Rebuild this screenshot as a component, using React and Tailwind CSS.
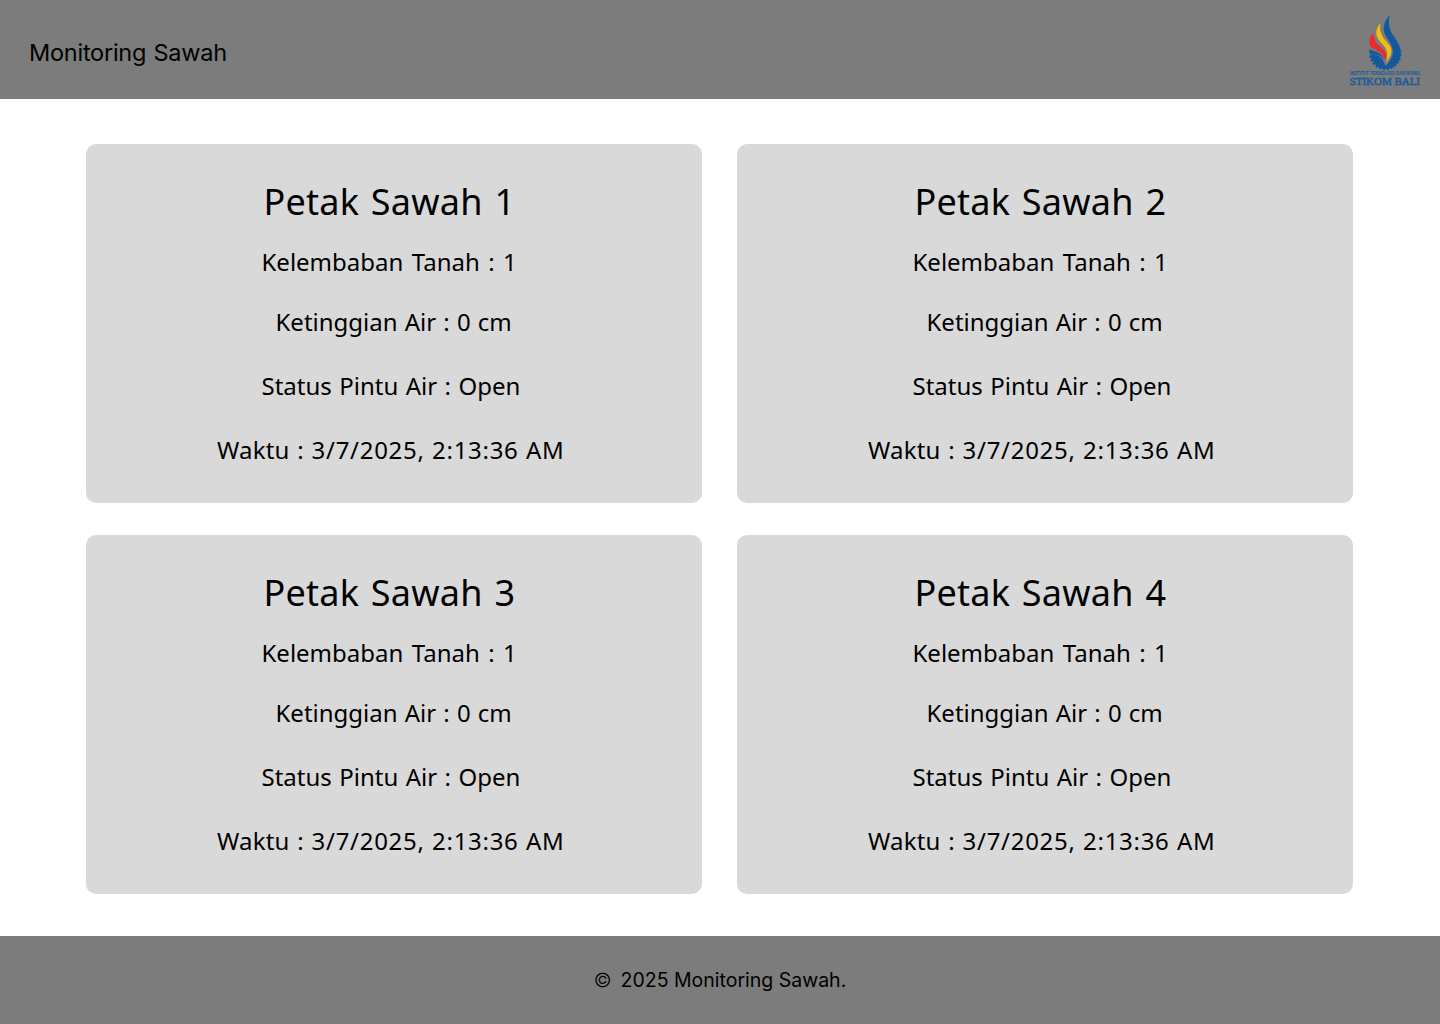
const plots = [1, 2, 3, 4].map((id) => ({
  id,
  moisture: "1",
  level: "0 cm",
  gate: "Open",
  time: "3/7/2025, 2:13:36 AM",
}));

function Logo() {
  return (
    <svg className="h-[86px] w-[90px] shrink-0" viewBox="0 0 270 258" aria-label="STIKOM BALI">
      <clipPath id="gear">
        <path d="M80 138 L110 138 L135 160 L160 130 L176 120 H192 V195 H80Z" />
      </clipPath>
      <circle cx="136" cy="138" r="44" fill="none" stroke="#15599d" strokeWidth="9" strokeDasharray="6.6 4.92" pathLength="276.5" clipPath="url(#gear)" />
      <path d="M92 139 C110 138 128 146 136 173 C152 160 162 140 157 120 C152 102 136 88 132 70 C129 52 136 36 149 21 C144 46 148 64 158 80 C170 97 183 112 182 137 C180 165 160 183 137 183 C112 183 94 163 92 139Z" fill="#15599d" />
      <path d="M122 46 C107 60 106 79 114 93 C123 107 137 114 141 132 C143 143 141 153 138 164 C149 152 157 136 153 121 C148 106 133 97 126 81 C119 68 119 58 122 46Z" fill="#f2bd12" stroke="#7c7c7c" strokeWidth="5" paintOrder="stroke" />
      <path d="M100 75 C88 85 83 105 94 117 C106 128 128 129 136 158 C141 142 137 130 128 122 C116 111 101 104 100 75Z" fill="#ee2a2c" stroke="#7c7c7c" strokeWidth="4" paintOrder="stroke" />
      <path d="M87 124 C102 131 123 131 133 155 C122 142 111 137 89 139 Z" fill="#15599d" />
      <text x="30" y="200" textLength="210" lengthAdjust="spacingAndGlyphs" fontFamily="Liberation Sans" fontWeight="700" fontSize="14" fill="#15599d">
        INSTITUT TEKNOLOGI DAN BISNIS
      </text>
      <text x="29" y="231" textLength="211" lengthAdjust="spacingAndGlyphs" fontFamily="Liberation Serif" fontSize="34" fill="#15599d" stroke="#15599d" strokeWidth="1.5">
        STIKOM BALI
      </text>
    </svg>
  );
}

function PlotCard({ plot }) {
  return (
    <section className="h-[359px] rounded-[10px] bg-[#d9d9d9] pt-[33px] font-['Noto_Sans',sans-serif] text-2xl leading-10 whitespace-nowrap text-black">
      <h2 className="pl-[177.5px] text-4xl leading-[50px] tracking-[0.25px] [word-spacing:2px]">Petak Sawah {plot.id}</h2>
      <p className="mt-[15px] pl-[175.5px] [word-spacing:2.2px]">Kelembaban Tanah : {plot.moisture}</p>
      <p className="mt-5 pl-[189.5px] [word-spacing:0.9px]">Ketinggian Air : {plot.level}</p>
      <p className="mt-6 pl-[175.5px] [word-spacing:1.2px]">Status Pintu Air : {plot.gate}</p>
      <p className="mt-6 pl-[131px] tracking-[0.2px] [word-spacing:1.2px]">
        Waktu : <span className="tracking-[0.72px] [word-spacing:0.4px]">{plot.time}</span>
      </p>
    </section>
  );
}

export default function App() {
  return (
    <div className="flex h-[1024px] w-[1440px] flex-col bg-white font-['Inter',sans-serif] text-black">
      <header className="flex h-[99px] items-center justify-between bg-[#7c7c7c] pr-[10px] pl-[29px]">
        <h1 className="pt-[7px] text-[23.5px] leading-8 tracking-[-0.25px] [word-spacing:1px]">Monitoring Sawah</h1>
        <div className="pt-[3px]">
          <Logo />
        </div>
      </header>
      <main className="grid flex-1 grid-cols-[616px_616px] content-start gap-x-[35px] gap-y-8 pt-[45px] pl-[86px]">
        {plots.map((plot) => (
          <PlotCard key={plot.id} plot={plot} />
        ))}
      </main>
      <footer className="flex h-[88px] items-center justify-center gap-[9px] bg-[#7c7c7c] text-[19.5px] leading-7">
        <span className="font-light">©</span>
        <span>2025 Monitoring Sawah.</span>
      </footer>
    </div>
  );
}
